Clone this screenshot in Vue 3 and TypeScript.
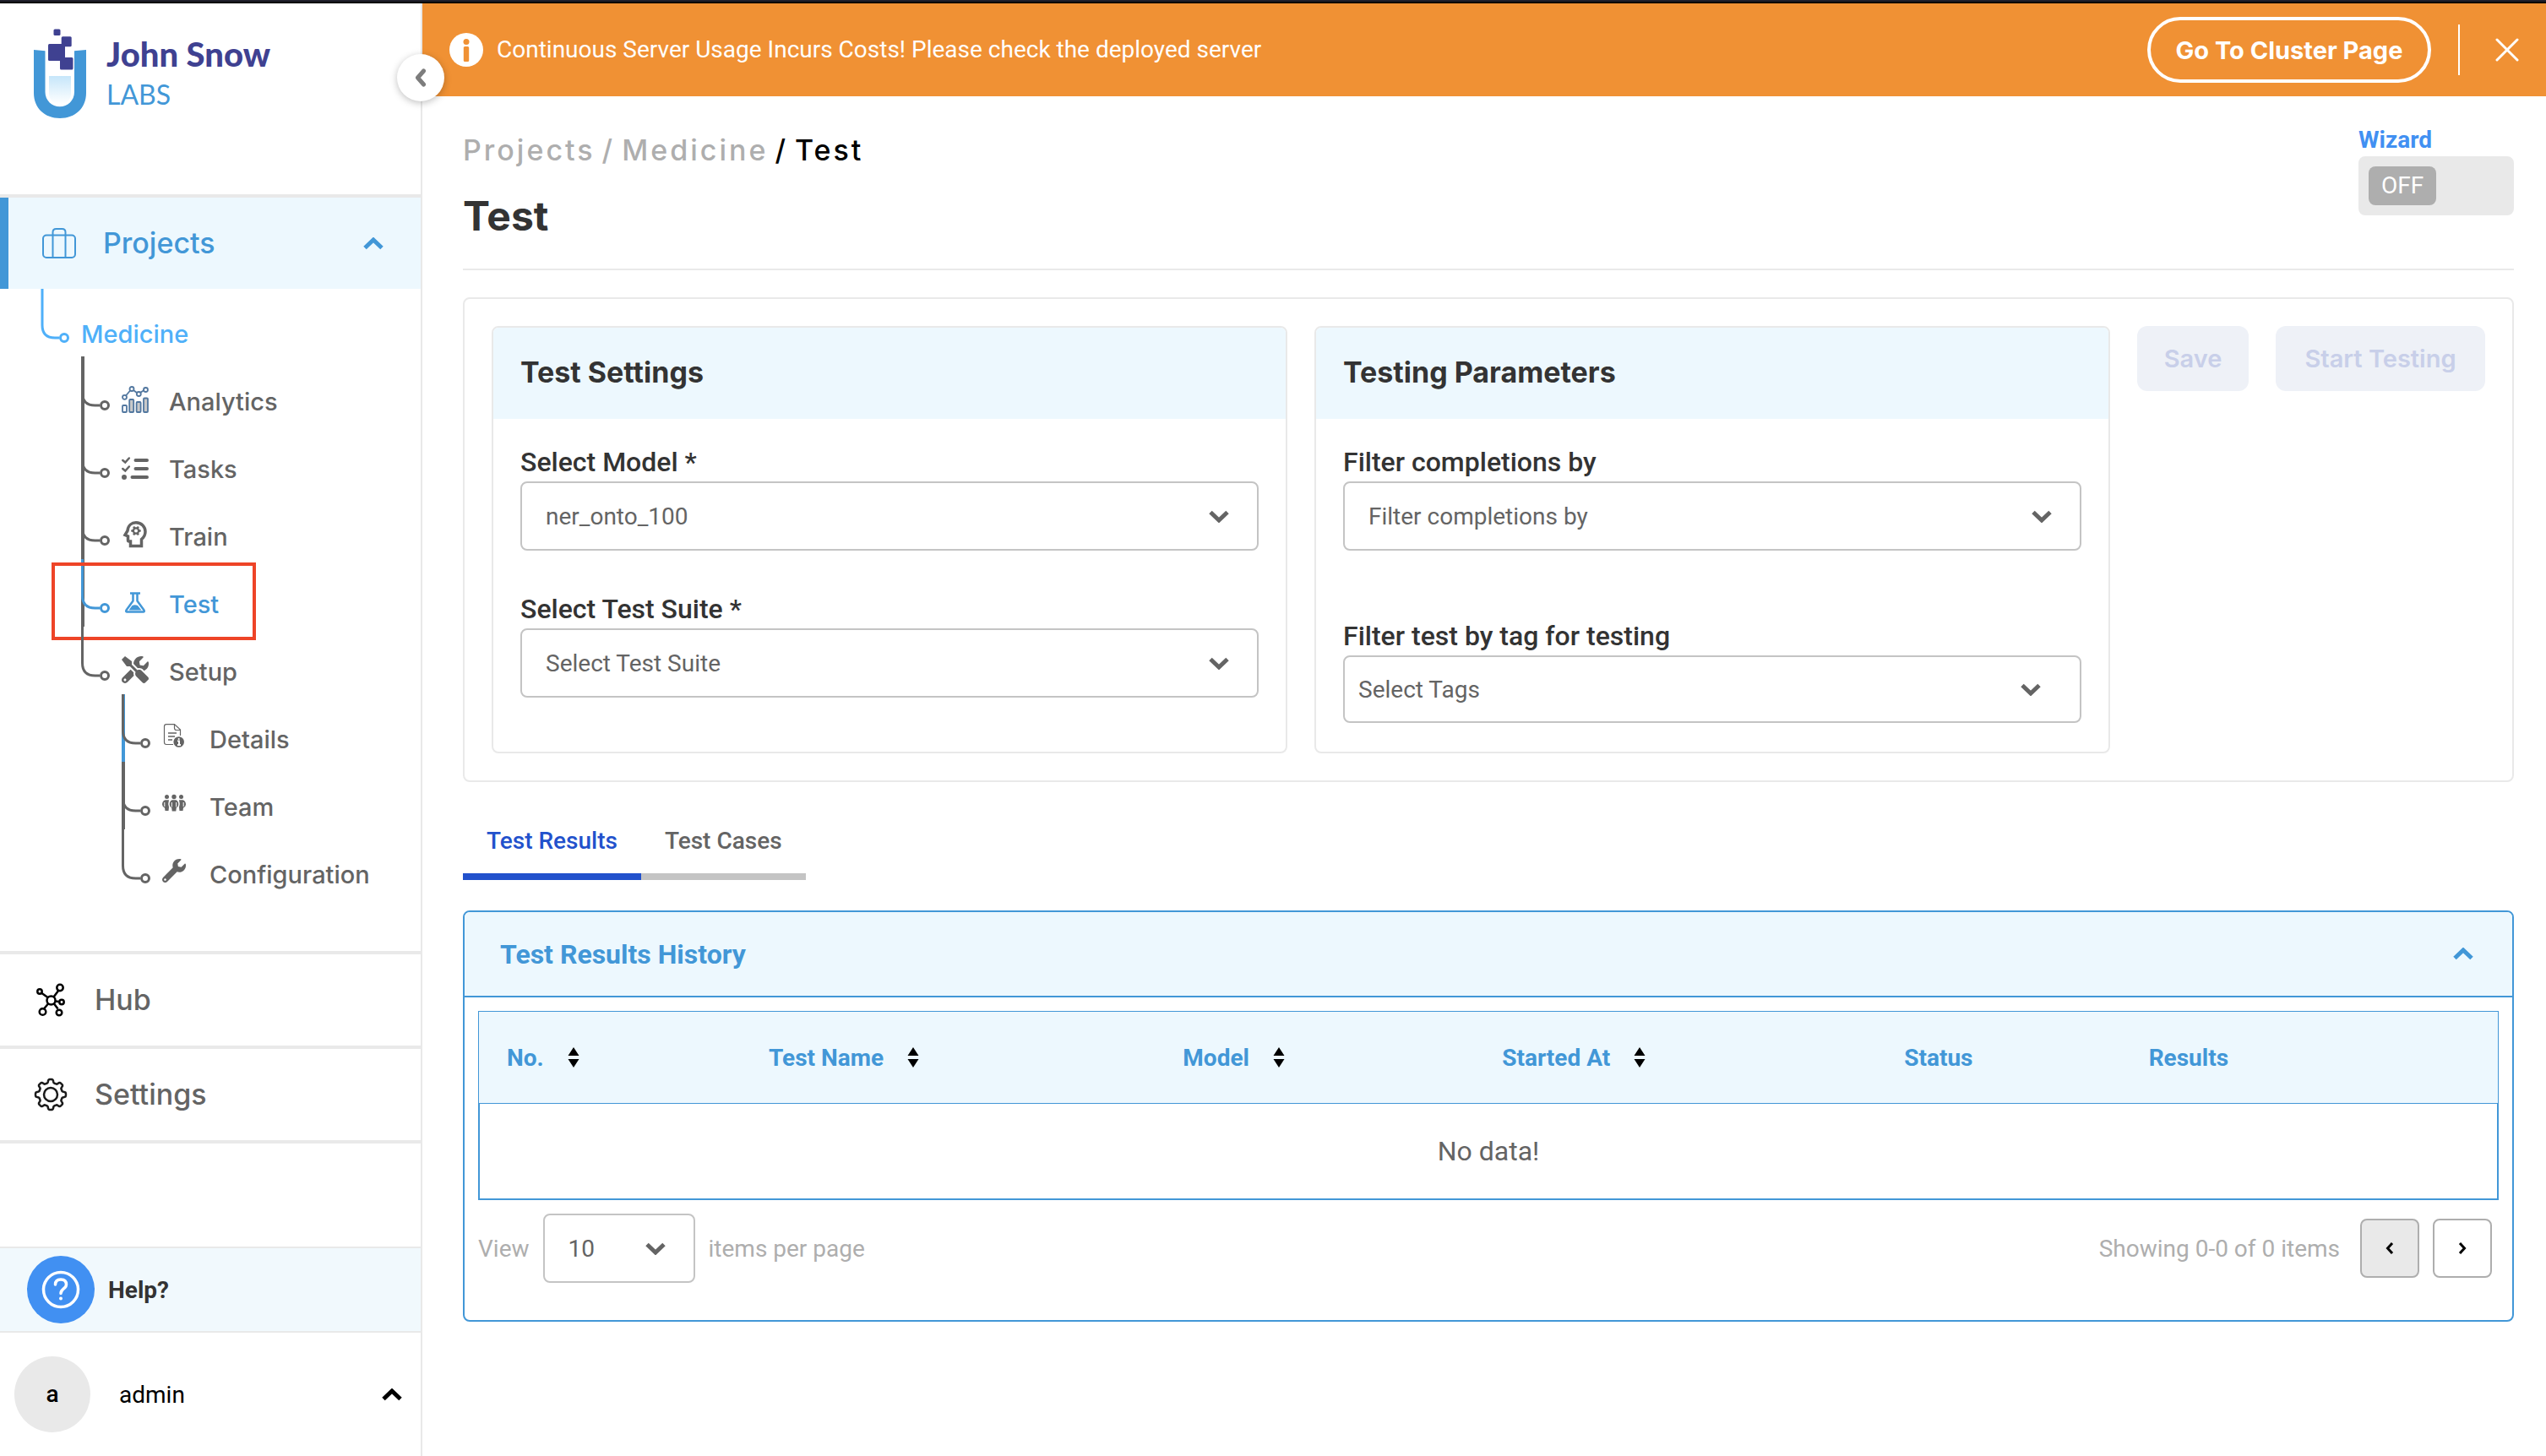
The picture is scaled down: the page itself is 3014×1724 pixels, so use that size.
<script setup lang="ts">
import { ref } from 'vue'

interface TreeItem {
  label: string
  icon: string
  active?: boolean
  trunk?: string
}

interface Column {
  label: string
  sortable: boolean
  width: string
}

const dark = '#646464'
const blue = '#4297d7'

const projectItems: TreeItem[] = [
  { label: 'Analytics', icon: 'analytics', trunk: dark },
  { label: 'Tasks', icon: 'tasks', trunk: dark },
  { label: 'Train', icon: 'train', trunk: dark },
  { label: 'Test', icon: 'test', trunk: dark, active: true },
  { label: 'Setup', icon: 'setup' },
]

const setupItems: TreeItem[] = [
  { label: 'Details', icon: 'details', trunk: blue },
  { label: 'Team', icon: 'team', trunk: dark },
  { label: 'Configuration', icon: 'configuration' },
]

const columns: Column[] = [
  { label: 'No.', sortable: true, width: '13%' },
  { label: 'Test Name', sortable: true, width: '20.5%' },
  { label: 'Model', sortable: true, width: '15.8%' },
  { label: 'Started At', sortable: true, width: '19.9%' },
  { label: 'Status', sortable: false, width: '12.1%' },
  { label: 'Results', sortable: false, width: '18.7%' },
]

const model = ref('ner_onto_100')
const suite = ref('Select Test Suite')
const completions = ref('Filter completions by')
const tags = ref('Select Tags')
const pageSize = ref('10')

// Outline of a cog with rounded teeth around (cx, cy).
function cog(cx: number, cy: number, r: number, depth: number, teeth: number): string {
  const points: string[] = []
  for (let i = 0; i < 180; i++) {
    const a = (i / 180) * Math.PI * 2
    const d = r + depth * Math.tanh(2.5 * Math.cos(teeth * a))
    points.push(`${(cx + d * Math.cos(a)).toFixed(2)} ${(cy + d * Math.sin(a)).toFixed(2)}`)
  }
  return `M${points.join('L')}Z`
}

const settingsCog = cog(20, 20, 16, 2, 8)
const headCog = cog(15, 11.5, 5, 0.8, 6)
</script>

<template>
  <div class="app">
    <div class="window-edge"></div>
    <div class="shell">
      <aside class="sidebar">
        <a class="brand" href="#">
          <svg class="brand-mark" viewBox="40 34 62 106" width="62" height="106" aria-hidden="true">
            <defs>
              <linearGradient id="liquid" x1="0" y1="0" x2="0" y2="1">
                <stop offset="0" stop-color="#c6e6fa" />
                <stop offset="1" stop-color="#fff" />
              </linearGradient>
            </defs>
            <path
              fill="#4297d7"
              d="M40 59l13.500 1.300V109c0 10 8 17.300 17.300 17.300S88 119 88 109V60.300L102 59v51c0 18-13 30-31 30s-31-12-31-30z"
            />
            <path fill="url(#liquid)" d="M58 90h26v20c0 8-5 13-13 13s-13-5-13-13z" />
            <g fill="#3f4191">
              <rect x="63.500" y="34.500" width="8" height="7.500" rx="1.500" />
              <rect x="72.700" y="43.300" width="12" height="12" rx="1.500" />
              <rect x="57" y="52" width="20" height="20" rx="1.500" />
              <rect x="71" y="68" width="15.500" height="14.500" rx="1.500" />
            </g>
          </svg>
          <span class="brand-text">
            <span class="brand-name">John Snow</span>
            <span class="brand-sub">LABS</span>
          </span>
        </a>

        <button class="collapse" type="button" aria-label="Collapse sidebar">
          <svg viewBox="0 0 14 22" width="14" height="22" fill="none" stroke="#7d7d7d" stroke-width="5" stroke-linecap="round" stroke-linejoin="round">
            <path d="M10.500 3L3.500 11l7 8" />
          </svg>
        </button>

        <nav class="nav">
          <a class="nav-row projects" href="#">
            <svg viewBox="0 0 40 36" width="40" height="36" fill="none" stroke="#4297d7" stroke-width="2">
              <rect x="1" y="8.500" width="38" height="26.500" rx="4" />
              <path d="M12.500 35V5q0-4 4-4h7q4 0 4 4v30" />
            </svg>
            <span>Projects</span>
            <svg class="nav-chevron" viewBox="0 0 24 15" width="24" height="15" fill="none" stroke="#4297d7" stroke-width="5">
              <path d="M2 12.500L12 3l10 9.500" />
            </svg>
          </a>

          <ul class="tree">
            <li>
              <div class="tree-row medicine">
                <svg class="branch" viewBox="0 0 34 80" width="34" height="80" fill="none" stroke="#4fb0f9" stroke-width="3">
                  <path d="M2 0V43q0 15 15 15h5" />
                  <circle cx="28" cy="58" r="4.500" />
                </svg>
                <a class="tree-link" href="#">Medicine</a>
              </div>
              <ul>
                <li v-for="item in projectItems" :key="item.label">
                  <div class="tree-row" :class="{ active: item.active }">
                    <svg class="branch" viewBox="0 0 34 80" width="34" height="80" fill="none" stroke-width="3">
                      <path v-if="item.trunk" d="M2 0V80" :stroke="item.trunk" stroke-width="4" />
                      <path d="M1.500 0V43q0 15 15 15h5.500" stroke="currentColor" />
                      <circle cx="28" cy="58" r="4.500" stroke="currentColor" />
                    </svg>
                    <a class="tree-link" href="#">
                      <svg class="icon" viewBox="0 0 32 32" width="32" height="32" aria-hidden="true">
                        <g v-if="item.icon === 'analytics'" stroke="#52779f" stroke-width="1.800">
                          <g fill="#c9c9c9">
                            <rect x="1" y="23" width="5" height="8" rx="1" fill="#fff" />
                            <rect x="9.200" y="16" width="5" height="15" rx="1" />
                            <rect x="17.600" y="19" width="5" height="12" rx="1" />
                            <rect x="26" y="14.500" width="5" height="16.500" rx="1" />
                          </g>
                          <g fill="none">
                            <path d="M5 11.500L10.500 5M14 5l4.500 3.500M22 8l4.500-3" />
                            <circle cx="3.500" cy="13.300" r="2.500" />
                            <circle cx="12" cy="3.500" r="2.500" />
                            <circle cx="20.300" cy="9.500" r="2.500" />
                            <circle cx="28.500" cy="4.500" r="2.500" />
                          </g>
                        </g>
                        <g v-else-if="item.icon === 'tasks'" fill="none" stroke="#646464" stroke-linecap="round">
                          <path stroke-width="4" d="M16.500 8h13.500M16.500 18h13.500M12.500 28H30" />
                          <path stroke-width="2.500" d="M1.300 8l3 2.500 4.500-5M1.300 18l3 2.500 4.500-5" />
                          <circle cx="3" cy="28" r="3" fill="#646464" stroke="none" />
                        </g>
                        <g v-else-if="item.icon === 'train'" transform="translate(2 0)">
                          <path
                            fill="none"
                            stroke="#646464"
                            stroke-width="3.500"
                            d="M8.500 29.500V24H7q-1.500 0-1.500-1.500V18L2 16.500 5 11.500C5.500 5 10 1.800 15 1.800 21.500 1.800 26 6.500 26 12.500c0 4.500-2 7-4.500 9v8z"
                          />
                          <path fill="#646464" :d="headCog" />
                          <circle cx="15" cy="11.500" r="2" fill="#fff" />
                        </g>
                        <g v-else-if="item.icon === 'test'">
                          <path fill="none" stroke="#4297d7" stroke-width="2.500" stroke-linejoin="round" d="M10 5.500h12M13.500 5.500v9L5.500 25.500q-1 2 1 2h19q2 0 1-2L18.500 14.500v-9" />
                          <path fill="#4297d7" d="M8.500 25.500l4-5.500q3-1.500 6.500 0l4.500 5.500z" />
                        </g>
                        <path
                          v-else
                          fill="#646464"
                          transform="scale(.0625)"
                          d="M501.100 395.700L384 278.600c-23.100-23.100-57.600-27.600-85.400-13.900L192 158.100V96L64 0 0 64l96 128h62.100l106.600 106.600c-13.600 27.800-9.200 62.300 13.900 85.400l117.100 117.100c14.600 14.600 38.200 14.600 52.700 0l52.700-52.700c14.500-14.600 14.500-38.200 0-52.700zM331.700 225c28.300 0 54.900 11 74.900 31l19.400 19.400c15.800-6.900 30.800-16.500 43.800-29.500 37.100-37.100 49.700-89.300 37.900-136.700-2.200-9-13.500-12.100-20.100-5.500l-74.400 74.400-67.900-11.300L334 98.900l74.400-74.400c6.600-6.600 3.400-17.900-5.700-20.200-47.400-11.700-99.600.9-136.600 37.900-28.500 28.500-41.900 66.100-41.200 103.600l82.100 82.100c8.100-1.900 16.500-2.900 24.700-2.900zm-103.900 82l-56.700-56.700L18.700 402.800c-25 25-25 65.500 0 90.500s65.500 25 90.500 0l123.600-123.600c-7.600-19.900-9.900-41.600-5-62.700zM64 472c-13.200 0-24-10.800-24-24 0-13.300 10.700-24 24-24s24 10.700 24 24c0 13.200-10.700 24-24 24z"
                        />
                      </svg>
                      <span>{{ item.label }}</span>
                    </a>
                    <span v-if="item.active" class="highlight"></span>
                  </div>
                  <ul v-if="item.label === 'Setup'">
                    <li v-for="sub in setupItems" :key="sub.label">
                      <div class="tree-row">
                        <svg class="branch" viewBox="0 0 34 80" width="34" height="80" fill="none" stroke-width="3">
                          <path v-if="sub.trunk" d="M2 0V80" :stroke="sub.trunk" stroke-width="4" />
                          <path d="M1.500 0V43q0 15 15 15h5.500" stroke="currentColor" />
                          <circle cx="28" cy="58" r="4.500" stroke="currentColor" />
                        </svg>
                        <a class="tree-link sub" href="#">
                          <svg class="icon" viewBox="0 0 28 28" width="28" height="28" aria-hidden="true">
                            <g v-if="sub.icon === 'details'">
                              <path fill="none" stroke="#646464" stroke-width="1.200" d="M13 24.500H5q-2.500 0-2.500-2.500V3Q2.500.6 5 .6h9.500L21.500 7v7M14.500.6V5q0 2.500 2.500 2.500h4.500" />
                              <path stroke="#646464" stroke-width="1.300" d="M7 11h10M7 15h8M7 19h5" />
                              <circle cx="19.700" cy="21.500" r="6.300" fill="#646464" />
                              <path stroke="#fff" stroke-width="2" d="M18 20.500h2v5M18 25h4" />
                              <circle cx="19.700" cy="18" r="1.100" fill="#fff" />
                            </g>
                            <g v-else-if="sub.icon === 'team'" fill="#646464">
                              <circle cx="5.500" cy="6.500" r="2.500" />
                              <circle cx="14" cy="6.500" r="2.700" />
                              <circle cx="22.500" cy="6.500" r="2.500" />
                              <path d="M3.500 10.200h4.500q-1.500 4.500 0 8.500l-.5 4.300h-4L3 19.500Q0 18 0 15.500q0-4 3.500-5.300z" />
                              <path d="M24.500 10.200H20q1.500 4.500 0 8.500l.5 4.300h4l.5-3.500q3-1.500 3-4 0-4-3.500-5.300z" />
                              <path d="M11.500 10.200h5q2.800 1.500 2.800 5.300 0 2.500-2.500 4l-.5 4h-4.600l-.5-4q-2.500-1.500-2.500-4 0-3.800 2.800-5.300z" />
                              <path fill="none" stroke="#fff" stroke-width="1" d="M2.800 13v5M25.200 13v5M11.300 13v5.500M16.700 13v5.500" />
                            </g>
                            <path
                              v-else
                              fill="#646464"
                              transform="scale(.0547)"
                              d="M507.730 109.100c-2.240-9.030-13.540-12.090-20.120-5.510l-74.360 74.360-67.880-11.310-11.310-67.880 74.360-74.360c6.620-6.620 3.430-17.900-5.660-20.160-47.380-11.740-99.550.91-136.580 37.930-39.640 39.640-50.550 97.100-34.050 147.200L18.740 402.760c-24.990 24.990-24.990 65.510 0 90.500 24.990 24.990 65.510 24.990 90.500 0l213.210-213.210c50.120 16.710 107.470 5.680 147.370-34.220 37.070-37.070 49.700-89.320 37.910-136.730zM64 472c-13.250 0-24-10.750-24-24 0-13.260 10.750-24 24-24s24 10.740 24 24c0 13.250-10.750 24-24 24z"
                            />
                          </svg>
                          <span>{{ sub.label }}</span>
                        </a>
                      </div>
                    </li>
                  </ul>
                </li>
              </ul>
            </li>
          </ul>

          <a class="nav-row" href="#">
            <svg viewBox="0 0 40 40" width="40" height="40" fill="none" stroke="#000" stroke-width="2.500">
              <circle cx="20.500" cy="20.500" r="5" />
              <path d="M16.500 17L9.500 12M23.500 16.500l6-8M25.500 21.500l4 .5M17 24.500l-5 6M24 24.500l4.500 6" />
              <circle cx="7" cy="10" r="2.700" />
              <circle cx="31" cy="5.500" r="3.700" />
              <circle cx="33" cy="22.500" r="2.700" />
              <circle cx="10.500" cy="34" r="3.800" />
              <circle cx="30" cy="35" r="3.300" />
            </svg>
            <span>Hub</span>
          </a>
          <a class="nav-row settings" href="#">
            <svg viewBox="0 0 40 40" width="40" height="40" fill="none" stroke="#1a1a1a" stroke-width="2.500">
              <path :d="settingsCog" />
              <circle cx="20" cy="20" r="8" />
            </svg>
            <span>Settings</span>
          </a>
        </nav>

        <div class="sidebar-foot">
          <a class="help" href="#">
            <svg viewBox="0 0 80 80" width="80" height="80" fill="none" stroke="#fff" stroke-linecap="round">
              <circle cx="40" cy="40" r="40" fill="#4190f2" stroke="none" />
              <circle cx="40" cy="40" r="20.500" stroke-width="3.500" />
              <path stroke-width="3.500" d="M33.500 34q0-6 6.500-6t6.500 6c0 5-6.500 5-6.500 10.500" />
              <circle cx="40" cy="50.500" r="2" fill="#fff" stroke="none" />
            </svg>
            <span>Help?</span>
          </a>
          <button class="user" type="button">
            <span class="avatar">a</span>
            <span class="user-name">admin</span>
            <svg viewBox="0 0 24 15" width="24" height="15" fill="none" stroke="#000" stroke-width="5">
              <path d="M2 12.500L12 3l10 9.500" />
            </svg>
          </button>
        </div>
      </aside>

      <div class="content">
        <div class="banner">
          <svg viewBox="0 0 40 40" width="40" height="40" aria-hidden="true">
            <circle cx="20" cy="20" r="20" fill="#fff" />
            <circle cx="20" cy="10.500" r="3.500" fill="#f09134" />
            <rect x="16.800" y="16" width="6.400" height="18" rx="1.500" fill="#f09134" />
          </svg>
          <p>Continuous Server Usage Incurs Costs! Please check the deployed server</p>
          <button class="cluster" type="button">Go To Cluster Page</button>
          <span class="banner-divider"></span>
          <button class="dismiss" type="button" aria-label="Dismiss">
            <svg viewBox="0 0 28 28" width="28" height="28" fill="none" stroke="#fff" stroke-width="3" stroke-linecap="round">
              <path d="M2 2l24 24M26 2L2 26" />
            </svg>
          </button>
        </div>

        <main class="page">
          <header class="page-head">
            <div class="page-title">
              <nav class="crumbs" aria-label="Breadcrumb">
                <a href="#">Projects</a>
                <span>/</span>
                <a href="#">Medicine</a>
                <span class="here">/</span>
                <span class="here">Test</span>
              </nav>
              <h1>Test</h1>
            </div>
            <div class="wizard">
              <span id="wizard-label">Wizard</span>
              <button class="switch" type="button" role="switch" aria-checked="false" aria-labelledby="wizard-label">
                <span>OFF</span>
              </button>
            </div>
          </header>

          <section class="panel">
            <div class="card">
              <h2>Test Settings</h2>
              <div class="card-body">
                <div class="field">
                  <label for="model">Select Model *</label>
                  <div class="select">
                    <select id="model" v-model="model">
                      <option>ner_onto_100</option>
                    </select>
                    <svg viewBox="0 0 24 15" width="24" height="15"><path d="M2 2.500L12 12l10-9.500" /></svg>
                  </div>
                </div>
                <div class="field">
                  <label for="suite">Select Test Suite *</label>
                  <div class="select">
                    <select id="suite" v-model="suite">
                      <option>Select Test Suite</option>
                    </select>
                    <svg viewBox="0 0 24 15" width="24" height="15"><path d="M2 2.500L12 12l10-9.500" /></svg>
                  </div>
                </div>
              </div>
            </div>

            <div class="card">
              <h2>Testing Parameters</h2>
              <div class="card-body wide">
                <div class="field">
                  <label for="completions">Filter completions by</label>
                  <div class="select">
                    <select id="completions" v-model="completions">
                      <option>Filter completions by</option>
                    </select>
                    <svg viewBox="0 0 24 15" width="24" height="15"><path d="M2 2.500L12 12l10-9.500" /></svg>
                  </div>
                </div>
                <div class="field">
                  <label for="tags">Filter test by tag for testing</label>
                  <div class="select tags">
                    <select id="tags" v-model="tags">
                      <option>Select Tags</option>
                    </select>
                    <svg viewBox="0 0 24 15" width="24" height="15"><path d="M2 2.500L12 12l10-9.500" /></svg>
                  </div>
                </div>
              </div>
            </div>

            <div class="actions">
              <button type="button" disabled>Save</button>
              <button type="button" disabled>Start Testing</button>
            </div>
          </section>

          <div class="tabs" role="tablist">
            <button class="tab selected" type="button" role="tab" aria-selected="true">Test Results</button>
            <button class="tab" type="button" role="tab" aria-selected="false">Test Cases</button>
          </div>

          <section class="history">
            <button class="history-head" type="button" aria-expanded="true">
              <span>Test Results History</span>
              <svg viewBox="0 0 24 15" width="24" height="15" fill="none" stroke="#4297d7" stroke-width="5">
                <path d="M2 12.500L12 3l10 9.500" />
              </svg>
            </button>
            <div class="history-body">
              <table>
                <colgroup>
                  <col v-for="col in columns" :key="col.label" :style="{ width: col.width }" />
                </colgroup>
                <thead>
                  <tr>
                    <th v-for="col in columns" :key="col.label" scope="col">
                      <button v-if="col.sortable" type="button" class="sort">
                        {{ col.label }}
                        <svg viewBox="0 0 14 24" width="14" height="24">
                          <path d="M7 0l6.500 10H.5zM7 24l6.500-10H.5z" />
                        </svg>
                      </button>
                      <template v-else>{{ col.label }}</template>
                    </th>
                  </tr>
                </thead>
                <tbody>
                  <tr>
                    <td :colspan="columns.length">No data!</td>
                  </tr>
                </tbody>
              </table>
              <div class="pager">
                <label for="page-size">View</label>
                <div class="select size">
                  <select id="page-size" v-model="pageSize">
                    <option>10</option>
                  </select>
                  <svg viewBox="0 0 24 15" width="24" height="15"><path d="M2 2.500L12 12l10-9.500" /></svg>
                </div>
                <span>items per page</span>
                <span class="showing">Showing 0-0 of 0 items</span>
                <button class="step" type="button" disabled aria-label="Previous page">
                  <svg viewBox="0 0 10 14" width="10" height="14"><path d="M8 1L2.500 7 8 13" /></svg>
                </button>
                <button class="step" type="button" aria-label="Next page">
                  <svg viewBox="0 0 10 14" width="10" height="14"><path d="M2 1l5.500 6L2 13" /></svg>
                </button>
              </div>
            </div>
          </section>
        </main>
      </div>
    </div>
  </div>
</template>

<style>
body {
  background: #fff;
}
</style>

<style scoped>
.app,
.app * {
  box-sizing: border-box;
}

.app {
  display: flex;
  flex-direction: column;
  min-height: 100vh;
  font-family: Roboto, sans-serif;
  font-size: 28px;
  color: #646464;
}

a {
  color: inherit;
  text-decoration: none;
}

button,
select {
  font: inherit;
  color: inherit;
  border: 0;
  background: none;
  padding: 0;
  margin: 0;
}

ul {
  list-style: none;
  margin: 0;
  padding: 0;
}

svg {
  display: block;
  flex: none;
}

.window-edge {
  height: 4px;
  background: #000;
  border-top: 2px solid #20202b;
}

.shell {
  display: flex;
  flex: 1;
}

/* Sidebar */
.sidebar {
  position: relative;
  display: flex;
  flex-direction: column;
  flex: none;
  width: 500px;
  border-right: 2px solid #e9e9e9;
}

.brand {
  display: flex;
  align-items: flex-start;
  gap: 24px;
  height: 226px;
  padding: 30px 40px 0;
}

.brand-text {
  display: flex;
  flex-direction: column;
  padding-top: 6px;
  font-family: Lato, sans-serif;
}

.brand-name {
  font-size: 40px;
  line-height: 48px;
  font-weight: 900;
  color: #3f4191;
}

.brand-sub {
  font-size: 32px;
  line-height: 48px;
  color: #4297d7;
}

.collapse {
  position: absolute;
  top: 60px;
  right: -28px;
  display: flex;
  align-items: center;
  justify-content: center;
  width: 56px;
  height: 56px;
  border-radius: 50%;
  background: #fff;
  box-shadow: 0 2px 8px rgba(0, 0, 0, 0.25);
}

.nav-row {
  display: flex;
  align-items: center;
  gap: 32px;
  height: 112px;
  padding: 0 40px;
  border-top: 4px solid #e9e9e9;
  font-family: Inter, sans-serif;
  font-size: 34px;
  line-height: 40px;
  font-weight: 500;
}

.settings {
  height: 116px;
  border-bottom: 4px solid #e9e9e9;
}

.projects {
  color: #4297d7;
  background: linear-gradient(#4297d7, #4297d7) 0 0 / 10px 100% no-repeat #edf8fe;
  padding: 0 44px 0 50px;
}

.nav-chevron {
  margin-left: auto;
}

.tree {
  padding-bottom: 64px;
  font-family: Inter, sans-serif;
  font-size: 29px;
  font-weight: 500;
}

.tree ul,
.tree > li {
  padding-left: 48px;
}

.tree-row {
  position: relative;
  display: flex;
  gap: 14px;
}

.medicine {
  color: #4fb0f9;
}

.active {
  color: #4297d7;
}

.tree-link {
  display: flex;
  gap: 24px;
  padding-top: 35px;
  line-height: 38px;
}

.sub {
  gap: 28px;
}

.highlight {
  position: absolute;
  top: 4px;
  left: -35px;
  width: 242px;
  height: 92px;
  border: 4px solid #ee4427;
  pointer-events: none;
}

.sidebar-foot {
  margin-top: auto;
}

.help {
  display: flex;
  align-items: center;
  gap: 16px;
  height: 102px;
  padding-left: 32px;
  border-top: 2px solid #e9e9e9;
  border-bottom: 2px solid #e9e9e9;
  background: #f1f9fd;
  color: #333;
  font-weight: 700;
}

.user {
  display: flex;
  align-items: center;
  width: 100%;
  height: 146px;
  padding: 0 22px 0 17px;
  gap: 34px;
  color: #000;
}

.avatar {
  width: 90px;
  line-height: 90px;
  border-radius: 50%;
  background: #e9e9e9;
  font-weight: 500;
  text-align: center;
}

.user-name {
  flex: 1;
  text-align: left;
}

/* Banner */
.content {
  flex: 1;
  min-width: 0;
}

.banner {
  display: flex;
  align-items: center;
  height: 110px;
  padding: 0 32px;
  background: #f09134;
  color: #fff;
}

.banner p {
  flex: 1;
  margin: 0 16px;
  line-height: 32px;
}

.cluster {
  width: 336px;
  height: 78px;
  border: 4px solid #fff;
  border-radius: 39px;
  font-family: Inter, sans-serif;
  font-size: 29px;
  font-weight: 700;
}

.banner-divider {
  width: 2px;
  height: 60px;
  margin: 0 42px 0 32px;
  background: #fff;
}

/* Page heading */
.page {
  padding: 34px 38px 48px 48px;
}

.page-head {
  display: flex;
  justify-content: space-between;
  padding-bottom: 34px;
  border-bottom: 2px solid #e9e9e9;
}

.page-title {
  padding-top: 10px;
  font-family: Inter, sans-serif;
}

.crumbs {
  display: flex;
  gap: 8px;
  font-size: 34px;
  line-height: 40px;
  font-weight: 500;
  letter-spacing: 3px;
  color: #aeaeae;
}

.crumbs .here {
  color: #000;
}

h1 {
  margin: 30px 0 0;
  font-size: 48px;
  line-height: 56px;
  font-weight: 700;
  color: #333;
}

.wizard {
  display: flex;
  flex-direction: column;
  gap: 2px;
  width: 184px;
  line-height: 35px;
  font-weight: 700;
  color: #4190f2;
}

.switch {
  display: flex;
  padding: 12px;
  border-radius: 8px;
  background: #e9e9e9;
  font-weight: 400;
  color: #fff;
}

.switch span {
  width: 80px;
  line-height: 46px;
  border-radius: 8px;
  background: #aeaeae;
}

/* Settings panel */
.panel {
  display: flex;
  gap: 32px;
  margin-top: 32px;
  padding: 32px;
  border: 2px solid #e9e9e9;
  border-radius: 8px;
}

.card {
  flex: 1;
  border: 2px solid #e9e9e9;
  border-radius: 8px;
  overflow: hidden;
}

h2 {
  margin: 0;
  padding: 0 32px 2px;
  background: #edf8fe;
  font-family: Inter, sans-serif;
  font-size: 34px;
  line-height: 106px;
  font-weight: 700;
  color: #333;
}

.card-body {
  display: flex;
  flex-direction: column;
  gap: 50px;
  padding: 32px 32px 64px;
}

.wide {
  gap: 82px;
  padding-bottom: 34px;
}

.field {
  display: flex;
  flex-direction: column;
  gap: 4px;
}

.field label {
  font-size: 32px;
  line-height: 38px;
  font-weight: 500;
  color: #333;
}

.select {
  display: grid;
  align-items: center;
}

.select select,
.select svg {
  grid-area: 1 / 1;
}

.select select {
  appearance: none;
  width: 100%;
  height: 82px;
  padding: 0 72px 0 28px;
  border: 2px solid #c4c4c4;
  border-radius: 8px;
  background: #fff;
}

.select svg {
  justify-self: end;
  margin-right: 35px;
  fill: none;
  stroke: #646464;
  stroke-width: 5;
  pointer-events: none;
}

.tags select {
  height: 80px;
  padding-left: 16px;
}

.tags svg {
  margin-right: 48px;
}

.actions {
  display: grid;
  grid-template-columns: 132px 248px;
  align-items: start;
  gap: 32px;
}

.actions button {
  height: 77px;
  border-radius: 12px;
  background: #eef1f7;
  font-family: Inter, sans-serif;
  font-size: 29px;
  font-weight: 600;
  color: #c8cfe9;
}

/* Tabs */
.tabs {
  display: flex;
  margin: 32px 0 36px;
}

.tab {
  padding: 18px 28px;
  border-bottom: 8px solid #c4c4c4;
  line-height: 40px;
  font-weight: 500;
}

.selected {
  border-color: #2251cc;
  color: #2251cc;
}

/* Results history */
.history {
  border: 2px solid #4297d7;
  border-radius: 8px;
  overflow: hidden;
}

.history-head {
  display: flex;
  align-items: center;
  justify-content: space-between;
  width: 100%;
  height: 101px;
  padding: 0 46px 0 42px;
  border-bottom: 2px solid #4297d7;
  background: #edf8fe;
  font-size: 32px;
  line-height: 36px;
  font-weight: 700;
  color: #4297d7;
}

.history-body {
  padding: 16px 16px 44px;
}

table {
  width: 100%;
  table-layout: fixed;
  border-collapse: separate;
  border-spacing: 0;
}

th {
  height: 110px;
  padding: 0 0 0 33px;
  border: solid #4297d7;
  border-width: 1px 0;
  background: #edf8fe;
  text-align: left;
  font-weight: 700;
  color: #4297d7;
}

th:first-child {
  border-left-width: 1px;
}

th:last-child {
  border-right-width: 1px;
}

.sort {
  display: flex;
  align-items: center;
  gap: 28px;
}

td {
  height: 114px;
  padding: 0;
  border: 2px solid #4297d7;
  border-top: 0;
  text-align: center;
  font-size: 32px;
}

.pager {
  display: flex;
  align-items: center;
  gap: 16px;
  margin-top: 16px;
  padding-right: 8px;
  color: #aeaeae;
}

.size {
  width: 180px;
  color: #646464;
}

.showing {
  margin: 0 8px 0 auto;
}

.step {
  display: flex;
  align-items: center;
  justify-content: center;
  width: 70px;
  height: 70px;
  border: 2px solid #aeaeae;
  border-radius: 8px;
}

.step:disabled {
  background: #e9e9e9;
}

.step svg {
  fill: none;
  stroke: #000;
  stroke-width: 3;
}
</style>
